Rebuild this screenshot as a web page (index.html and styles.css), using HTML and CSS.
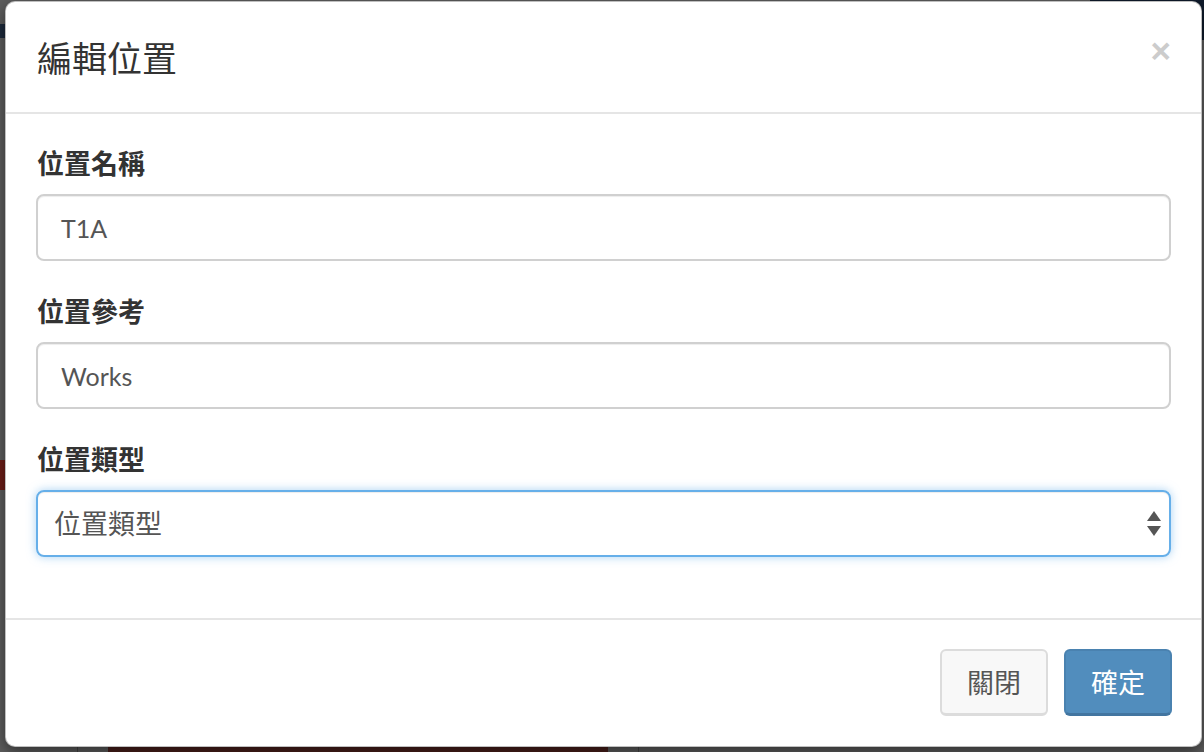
FILE: index.html
```html
<!DOCTYPE html>
<html lang="zh-Hant">
<head>
<meta charset="utf-8">
<title>編輯位置</title>
<link rel="stylesheet" href="styles.css">
</head>
<body>
<div class="page">
  <div class="bg-topbar"></div>
  <div class="bg-topright"></div>
  <div class="bg-redmark"></div>
  <div class="bg-redbar"></div>
  <div class="bg-vline bg-vline-a"></div>
  <div class="bg-vline bg-vline-b"></div>

  <div class="modal">
    <div class="modal-header">
      <h4 class="modal-title">編輯位置</h4>
      <button class="close" type="button">×</button>
    </div>
    <div class="modal-body">
      <div class="form-group">
        <label class="form-label">位置名稱</label>
        <div class="form-control">T1A</div>
      </div>
      <div class="form-group">
        <label class="form-label">位置參考</label>
        <div class="form-control">Works</div>
      </div>
      <div class="form-group">
        <label class="form-label">位置類型</label>
        <div class="form-control select focus">
          <span class="select-text">位置類型</span>
          <svg class="select-arrows" width="14" height="26" viewBox="0 0 14 26">
            <path d="M7 0 L14 10 L0 10 Z" fill="#555"/>
            <path d="M0 15 L14 15 L7 25 Z" fill="#555"/>
          </svg>
        </div>
      </div>
    </div>
    <div class="modal-footer">
      <button class="btn btn-default" type="button">關閉</button>
      <button class="btn btn-primary" type="button">確定</button>
    </div>
  </div>
</div>
</body>
</html>
```

FILE: styles.css
```css
html, body {
  margin: 0;
  padding: 0;
}

body {
  width: 1204px;
  height: 752px;
  overflow: hidden;
  font-family: Lato, "Noto Sans CJK TC", sans-serif;
}

.page {
  position: relative;
  width: 1204px;
  height: 752px;
  background: #5e5e5e;
}

.bg-topbar {
  position: absolute;
  left: 0;
  top: 24px;
  width: 40px;
  height: 14px;
  background: #1d2b3d;
}

.bg-topright {
  position: absolute;
  left: 1090px;
  top: 0;
  width: 114px;
  height: 40px;
  background: #0f1b2c;
}

.bg-redmark {
  position: absolute;
  left: 0;
  top: 460px;
  width: 6px;
  height: 30px;
  background: #6e1e18;
}

.bg-redbar {
  position: absolute;
  left: 108px;
  top: 738px;
  width: 500px;
  height: 14px;
  background: #4a1f1b;
}

.bg-vline {
  position: absolute;
  top: 730px;
  width: 1px;
  height: 22px;
  background: #444;
}

.bg-vline-a { left: 77px; }
.bg-vline-b { left: 638px; }

.modal {
  position: absolute;
  left: 5px;
  top: 1px;
  width: 1197px;
  height: 746px;
  box-sizing: border-box;
  background: #fff;
  border: 1px solid rgba(0, 0, 0, 0.25);
  border-radius: 10px;
  box-shadow: 0 5px 15px rgba(0, 0, 0, 0.5);
  display: flex;
  flex-direction: column;
  overflow: hidden;
}

.modal-header {
  height: 110px;
  flex: none;
  border-bottom: 2px solid #e5e5e5;
  padding: 0 30px 0 31px;
  display: flex;
  align-items: center;
  justify-content: space-between;
}

.modal-title {
  margin: 0;
  font-size: 35px;
  font-weight: 400;
  color: #333;
  line-height: 1.2;
  margin-top: 2px;
}

.close {
  border: 0;
  background: transparent;
  padding: 0;
  margin: -14px 0 0 0;
  font-family: "Liberation Sans", sans-serif;
  font-size: 35px;
  font-weight: 700;
  line-height: 1;
  color: #cccccc;
  cursor: pointer;
}

.modal-body {
  height: 504px;
  flex: none;
  box-sizing: border-box;
  padding: 31px 30px 0 30px;
}

.form-group {
  margin-bottom: 32px;
}

.form-label {
  display: block;
  font-size: 27px;
  font-weight: 700;
  line-height: 38px;
  color: #333;
  margin-bottom: 11px;
  padding-left: 1px;
}

.form-control {
  height: 67px;
  box-sizing: border-box;
  border: 2px solid #d0d0d0;
  border-radius: 8px;
  padding: 0 23px;
  display: flex;
  align-items: center;
  font-size: 25px;
  color: #555;
  box-shadow: inset 0 1px 1px rgba(0, 0, 0, 0.075);
}

.form-control.select {
  padding: 0 8px 0 16px;
  justify-content: space-between;
  font-size: 27px;
}

.form-control.focus {
  border-color: #66afe9;
  box-shadow: inset 0 1px 1px rgba(0, 0, 0, 0.075), 0 0 10px rgba(102, 175, 233, 0.55);
}

.select-text {
  color: #555;
  margin-top: -2px;
}

.select-arrows {
  display: block;
}

.modal-footer {
  height: 126px;
  flex: none;
  box-sizing: border-box;
  border-top: 2px solid #e5e5e5;
  padding: 29px 29px 0 30px;
  display: flex;
  justify-content: flex-end;
  align-items: flex-start;
  gap: 16px;
}

.btn {
  width: 108px;
  height: 67px;
  box-sizing: border-box;
  border-radius: 6px;
  font-family: Lato, "Noto Sans CJK TC", sans-serif;
  font-size: 27px;
  line-height: 1;
  padding: 0;
  cursor: pointer;
}

.btn-default {
  background: #f8f8f8;
  color: #555;
  border: 2px solid #dcdcdc;
  border-bottom-width: 3px;
}

.btn-primary {
  background: #518dbd;
  color: #fff;
  border: 2px solid #4a82b0;
  border-bottom: 3px solid #4275a0;
}
```
